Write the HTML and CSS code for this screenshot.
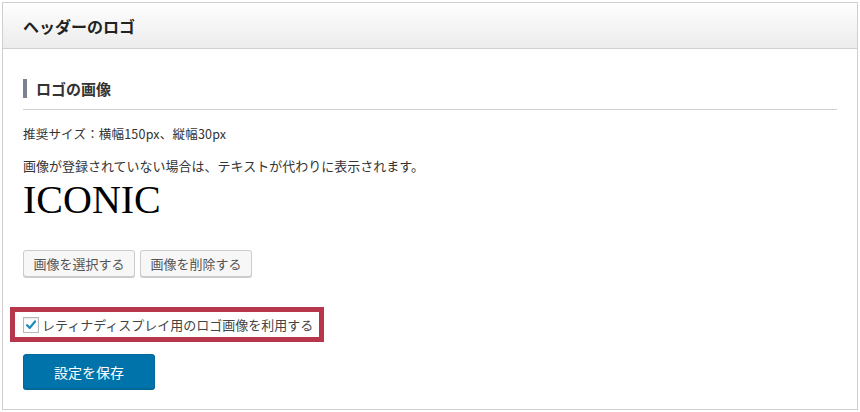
FILE: index.html
```html
<!DOCTYPE html>
<html lang="ja">
<head>
<meta charset="utf-8">
<title>ヘッダーのロゴ</title>
<link rel="stylesheet" href="styles.css">
</head>
<body>
<div class="panel">
  <div class="panel-header"><h2 class="panel-title">ヘッダーのロゴ</h2></div>
  <div class="panel-body">
    <div class="section-head"><h3 class="section-title">ロゴの画像</h3></div>
    <p class="note note-first">推奨サイズ：横幅150px、縦幅30px</p>
    <p class="note">画像が登録されていない場合は、テキストが代わりに表示されます。</p>
    <div class="logo-text">ICONIC</div>
    <div class="btn-row">
      <button class="btn">画像を選択する</button>
      <button class="btn">画像を削除する</button>
    </div>
    <div class="highlight">
      <label class="check-label">
        <span class="checkbox">
          <svg viewBox="0 0 16 16" width="16" height="16"><path d="M3.6 8.2 L6.6 11.3 L12.6 3.9" fill="none" stroke="#1e8cbe" stroke-width="2.6" stroke-linecap="round" stroke-linejoin="round"/></svg>
        </span>
        <span class="check-text">レティナディスプレイ用のロゴ画像を利用する</span>
      </label>
    </div>
    <button class="btn-primary">設定を保存</button>
  </div>
</div>
</body>
</html>
```

FILE: styles.css
```css
* { box-sizing: border-box; }
html, body { margin: 0; padding: 0; background: #fff; }
body {
  padding: 2px 0 0 2px;
  font-family: "Noto Sans CJK JP", "Noto Sans", sans-serif;
  color: #333;
}
.panel {
  width: 856px;
  height: 408px;
  border: 1px solid #cfcfcf;
  background: #fff;
}
.panel-header {
  height: 46px;
  border-bottom: 1px solid #cfcfcf;
  background: linear-gradient(#fefefe, #ececec);
  padding-left: 20px;
  display: flex;
  align-items: center;
}
.panel-title {
  margin: 0;
  font-size: 16px;
  font-weight: bold;
  color: #222;
  line-height: 20px;
}
.panel-body {
  padding: 30px 20px 0 20px;
}
.section-head {
  border-bottom: 1px solid #d2d2d2;
  padding-bottom: 11px;
}
.section-title {
  margin: 0;
  border-left: 4px solid #7b8195;
  padding-left: 9px;
  font-size: 15px;
  font-weight: bold;
  line-height: 19px;
  color: #333;
}
.note {
  margin: 12px 0 0 0;
  font-size: 13px;
  line-height: 20px;
  color: #333;
}
.note-first { margin-top: 14px; font-size: 12.5px; letter-spacing: 0.2px; }
.logo-text {
  margin-top: 4px;
  font-family: "Liberation Serif", "Times New Roman", serif;
  font-size: 40px;
  line-height: 40px;
  color: #000;
}
.btn-row {
  display: flex;
  gap: 5px;
  margin-top: 30px;
}
.btn {
  width: 112px;
  height: 27px;
  padding: 0;
  border: 1px solid #cccccc;
  border-radius: 3px;
  background: #f7f7f7;
  box-shadow: 0 1px 0 #cccccc;
  font-family: "Noto Sans CJK JP", sans-serif;
  font-size: 13px;
  color: #555;
  line-height: 25px;
}
.highlight {
  display: inline-block;
  margin: 30px 0 0 -13px;
  border: 5px solid #b8364b;
  background: #fff;
  padding: 5px 6px 4px 8px;
}
.check-label {
  display: flex;
  align-items: center;
  gap: 3px;
}
.checkbox {
  width: 16px;
  height: 16px;
  border: 1px solid #b4b9be;
  background: #fff;
  box-shadow: inset 0 1px 2px rgba(0,0,0,0.1);
  display: flex;
  align-items: center;
  justify-content: center;
}
.checkbox svg { display: block; }
.check-text {
  font-size: 13px;
  line-height: 16px;
  color: #444;
}
.btn-primary {
  display: block;
  margin-top: 12px;
  width: 132px;
  height: 35px;
  padding: 0;
  border: 1px solid #006799;
  border-radius: 3px;
  background: #0073aa;
  box-shadow: 0 1px 0 #006799;
  color: #fff;
  font-family: "Noto Sans CJK JP", sans-serif;
  font-size: 14px;
}
```
